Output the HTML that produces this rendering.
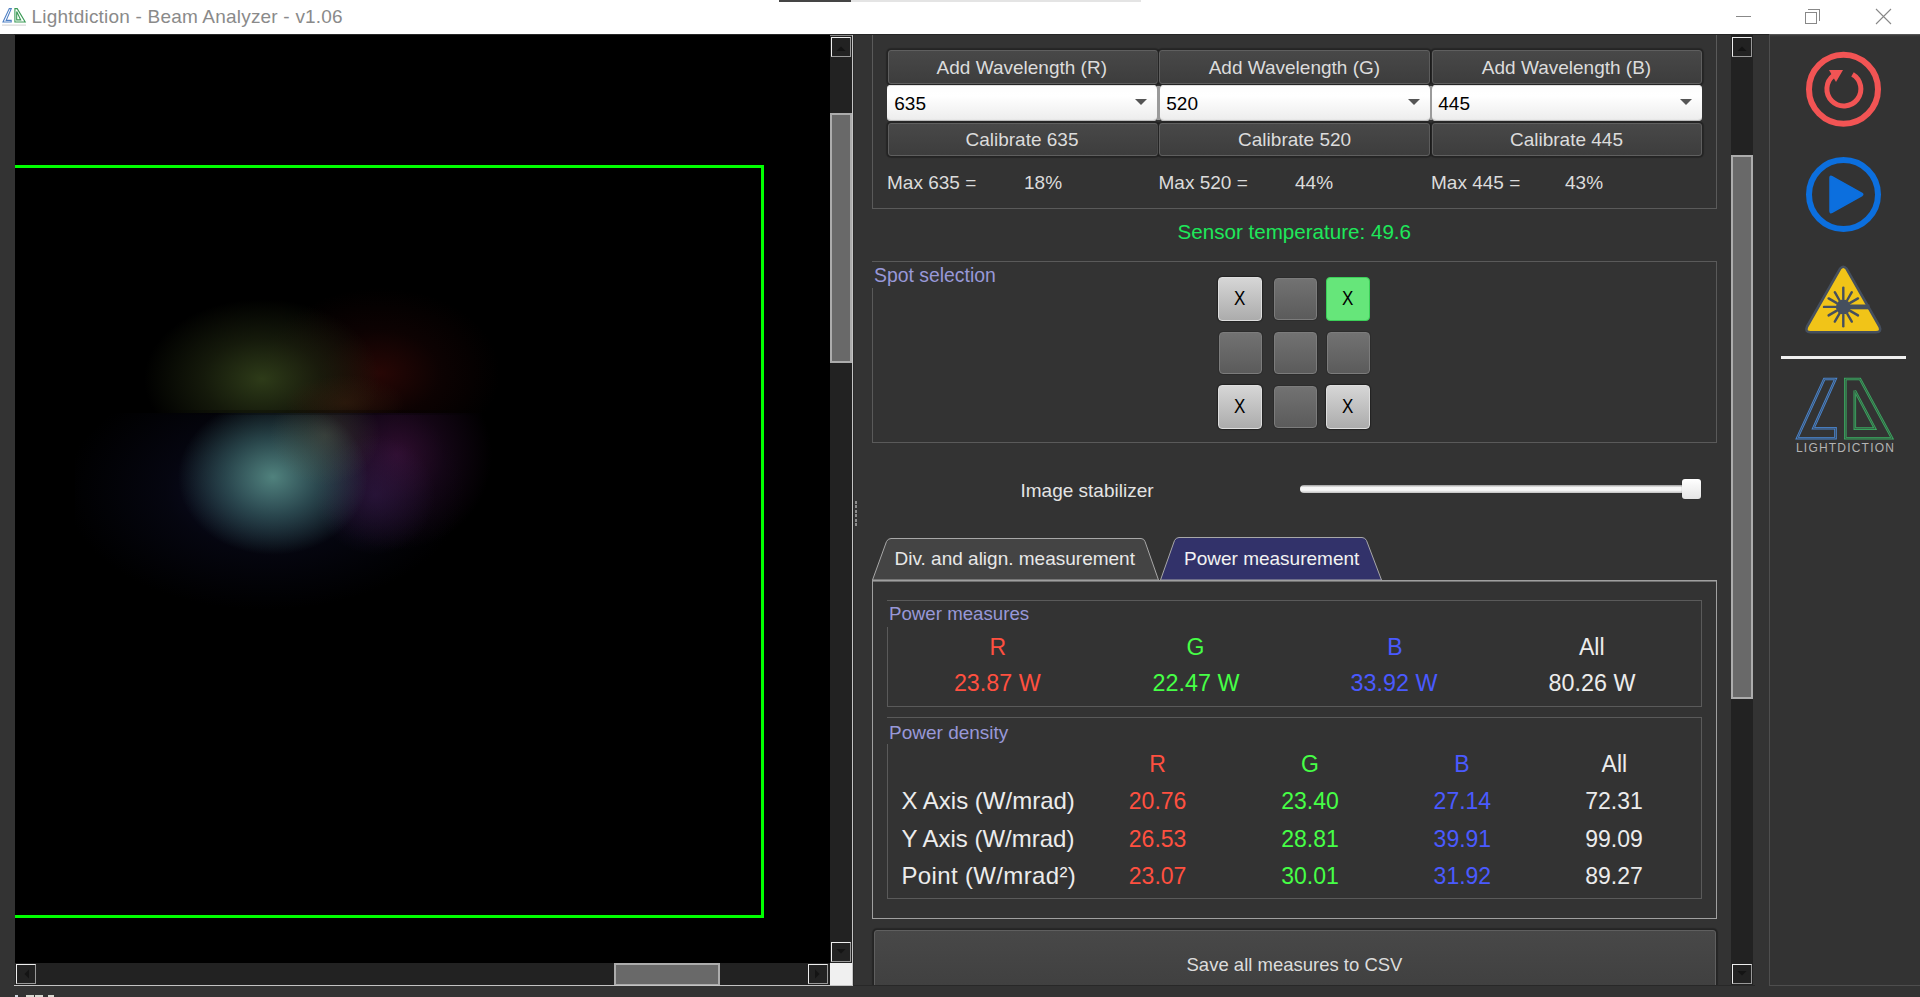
<!DOCTYPE html>
<html><head><meta charset="utf-8">
<style>
*{box-sizing:border-box;margin:0;padding:0}
html,body{width:1920px;height:997px;overflow:hidden;background:#333;font-family:"Liberation Sans",sans-serif}
.a{position:absolute}
.t{position:absolute;white-space:pre;line-height:1}
#title{left:0;top:0;width:1920px;height:34px;background:#fff;z-index:5}
.btn{position:absolute;border:1px solid #5f5f5f;border-radius:3px;background:linear-gradient(#484848,#3d3d3d);box-shadow:0 0 0 1px #242424,0 0 1px 2px rgba(0,0,0,.25)}
.combo{position:absolute;border-radius:4px;background:linear-gradient(#fdfdfd,#ffffff 30%,#ececec);box-shadow:inset 0 -2px 1px -1px #bdbdbd, inset 0 1px 0 #e0e0e0}
.combo i{position:absolute;right:10px;top:14px;width:0;height:0;border-left:6px solid transparent;border-right:6px solid transparent;border-top:6px solid #555}
.grp{position:absolute;border:1px solid #5a5a5a}
.sb{position:absolute;background:#222}
.arr{position:absolute;width:20px;height:20px;background:#222;border:1px solid #eee;border-right-color:#999;border-bottom-color:#999}
.thumb{position:absolute;background:#696969;border:2px solid #acacac}
.cell{position:absolute;width:44px;height:44px;border-radius:4px;font-size:20px;line-height:41px;text-align:center;color:#000}
.cell span{display:inline-block;transform:scaleX(0.85)}
.cx{background:linear-gradient(#d6d6d6,#acacac);border:1px solid #dedede;box-shadow:0 0 1px 1px rgba(0,0,0,.35)}
.cg{width:43px;height:42px;margin-top:1px;background:linear-gradient(#727272,#5b5b5b);border:1px solid #7c7c7c;box-shadow:0 0 0 1px #2c2c2c}
.cgr{background:#66e67a;border:1px solid #3ad058}
</style></head><body>
<!-- title bar -->
<div id="title" class="a">
<div class="a" style="left:779px;top:0;width:72px;height:2px;background:#454545"></div>
<div class="a" style="left:851px;top:0;width:290px;height:2px;background:#e4e4e4"></div>
<svg class="a" style="left:0;top:0" width="30" height="30" viewBox="0 0 30 30">
 <path d="M9.3 8.6h2L6.2 20.4h5v1.6H3z" fill="none" stroke="#4f80c4" stroke-width="1.1"/>
 <path d="M14.9 8.6h2.3l8 13.4h-10.3z M16.7 11.6v8.3h4z" fill="none" stroke="#3a9a55" stroke-width="1.1"/>
 <rect x="2" y="24.5" width="24" height="1.2" fill="#d8d8d8"/>
</svg>
<div class="t" style="left:31.5px;top:7px;font-size:19px;letter-spacing:0.2px;color:#8a8a8a">Lightdiction - Beam Analyzer - v1.06</div>
<div class="a" style="left:1736px;top:16px;width:15px;height:1px;background:#888"></div>
<div class="a" style="left:1808px;top:9px;width:12px;height:12px;border-top:1px solid #888;border-right:1px solid #888"></div>
<div class="a" style="left:1805px;top:12px;width:12px;height:12px;border:1px solid #888;background:#fff"></div>
<svg class="a" style="left:1875px;top:8px" width="17" height="17"><path d="M1 1L16 16M16 1L1 16" stroke="#888" stroke-width="1.1"/></svg>
</div>

<!-- top dark line -->
<div class="a" style="left:0;top:34px;width:1920px;height:1px;background:#262626"></div>
<div class="a" style="left:0;top:34px;width:14px;height:963px;background:#333"></div>

<!-- image viewport -->
<div class="a" style="left:15px;top:35px;width:815px;height:928px;background:#000;overflow:hidden">
<div class="a" style="left:60px;top:220px;width:520px;height:400px;background:
 radial-gradient(ellipse 55px 50px at 250px 180px, rgba(100,105,80,0.4), rgba(0,0,0,0) 100%),
 radial-gradient(ellipse 95px 78px at 198px 222px, rgba(84,136,130,0.95), rgba(60,105,105,0.62) 50%, rgba(0,0,0,0) 100%),
 radial-gradient(ellipse 60px 60px at 300px 240px, rgba(55,30,80,0.5), rgba(0,0,0,0) 100%),
 radial-gradient(ellipse 95px 95px at 322px 200px, rgba(62,17,60,0.75), rgba(42,12,45,0.45) 50%, rgba(0,0,0,0) 100%),
 radial-gradient(ellipse 200px 120px at 190px 235px, rgba(16,18,48,0.9), rgba(9,10,28,0.55) 50%, rgba(0,0,0,0) 100%);
 clip-path:inset(158px 0 0 0)"></div>
<div class="a" style="left:60px;top:220px;width:520px;height:400px;background:
 radial-gradient(ellipse 60px 28px at 270px 148px, rgba(62,34,16,0.5), rgba(0,0,0,0) 100%),
 radial-gradient(ellipse 118px 80px at 187px 124px, rgba(48,62,26,0.95), rgba(34,42,18,0.6) 50%, rgba(0,0,0,0) 100%),
 radial-gradient(ellipse 120px 85px at 305px 118px, rgba(46,8,6,0.85), rgba(28,5,5,0.45) 50%, rgba(0,0,0,0) 100%);
 clip-path:inset(0 0 242px 0)"></div>
<div class="a" style="left:60px;top:375px;width:520px;height:5px;background:linear-gradient(90deg,rgba(0,0,0,0),rgba(0,0,0,0.25) 30%,rgba(0,0,0,0.25) 70%,rgba(0,0,0,0))"></div>
<div class="a" style="left:-20px;top:130px;width:769px;height:753px;border:3px solid #00ff00"></div>
</div>
<!-- v scrollbar -->
<div class="sb" style="left:830px;top:35px;width:22px;height:928px"></div>
<div class="a" style="left:852px;top:35px;width:1px;height:951px;background:#c4c4c4"></div>
<div class="a" style="left:830px;top:35px;width:22px;height:1px;background:#888"></div>
<div class="arr" style="left:831px;top:37px"></div>
<div class="thumb" style="left:830px;top:113px;width:22px;height:250px"></div>
<div class="arr" style="left:831px;top:942px"></div>
<!-- h scrollbar -->
<div class="sb" style="left:15px;top:963px;width:815px;height:22px"></div>
<div class="a" style="left:14px;top:985px;width:839px;height:1px;background:#c4c4c4"></div>
<div class="arr" style="left:16px;top:964px"></div>
<div class="thumb" style="left:614px;top:963px;width:106px;height:22px;border-bottom-width:1px"></div>
<div class="arr" style="left:808px;top:964px"></div>
<div class="a" style="left:830px;top:963px;width:22px;height:22px;background:#f0f0f0"></div>

<!-- splitter -->
<div class="a" style="left:853px;top:35px;width:1px;height:951px;background:#2a2a2a"></div>
<div class="a" style="left:855px;top:501px;width:2px;height:3px;background:#8c8c8c"></div><div class="a" style="left:855px;top:505px;width:2px;height:3px;background:#8c8c8c"></div><div class="a" style="left:855px;top:510px;width:2px;height:3px;background:#8c8c8c"></div><div class="a" style="left:855px;top:514px;width:2px;height:3px;background:#8c8c8c"></div><div class="a" style="left:855px;top:519px;width:2px;height:3px;background:#8c8c8c"></div><div class="a" style="left:855px;top:523px;width:2px;height:3px;background:#8c8c8c"></div>

<!-- right panel clip -->
<div class="a" style="left:854px;top:35px;width:877px;height:950px;overflow:hidden">
<div class="a" style="left:-854px;top:-35px;width:1920px;height:997px">
<!-- group 1 -->
<div class="grp" style="left:872px;top:20px;width:845px;height:189px"></div>
<div class="btn" style="left:888px;top:50px;width:270px;height:34px"></div>
<div class="btn" style="left:1159px;top:50px;width:271px;height:34px"></div>
<div class="btn" style="left:1432px;top:50px;width:270px;height:34px"></div>
<div class="a" style="left:1157px;top:86px;width:3px;height:34px;background:#9a9a9a"></div>
<div class="a" style="left:1430px;top:86px;width:2px;height:34px;background:#9a9a9a"></div>
<div class="combo" style="left:887px;top:85px;width:270px;height:36px"><i></i></div>
<div class="combo" style="left:1159.5px;top:85px;width:270.5px;height:36px"><i></i></div>
<div class="combo" style="left:1431.5px;top:85px;width:270.5px;height:36px"><i></i></div>
<div class="btn" style="left:888px;top:123px;width:270px;height:33px"></div>
<div class="btn" style="left:1159px;top:123px;width:271px;height:33px"></div>
<div class="btn" style="left:1432px;top:123px;width:270px;height:33px"></div>

<!-- spot selection -->
<div class="grp" style="left:872px;top:261px;width:845px;height:182px"></div>
<div class="a" style="left:871px;top:262px;width:128px;height:26px;background:#333"></div>
<div class="cell cx" style="left:1218px;top:277px"><span>X</span></div>
<div class="cell cg" style="left:1273.5px;top:277px"></div>
<div class="cell cgr" style="left:1326px;top:277px"><span>X</span></div>
<div class="cell cg" style="left:1219px;top:331px"></div>
<div class="cell cg" style="left:1273.5px;top:331px"></div>
<div class="cell cg" style="left:1327px;top:331px"></div>
<div class="cell cx" style="left:1218px;top:385px"><span>X</span></div>
<div class="cell cg" style="left:1273.5px;top:385px"></div>
<div class="cell cx" style="left:1326px;top:385px"><span>X</span></div>

<!-- stabilizer -->
<div class="a" style="left:1300px;top:485px;width:391px;height:8px;border-radius:4px;background:linear-gradient(#9c9c9c,#f6f6f6 30%,#f8f8f8 65%,#c0c0c0)"></div>
<div class="a" style="left:1682px;top:479px;width:19px;height:20px;border-radius:3px;background:linear-gradient(#ffffff,#e4e4e4);box-shadow:0 0 1px rgba(0,0,0,.5)"></div>

<!-- tabs -->
<svg class="a" style="left:0;top:0" width="1920" height="997">
 <path d="M872.5 580 L886.5 541.5 Q888 538.5 891 538.5 L1141 538.5 Q1144 538.5 1145 541.5 L1158.5 580 Z" fill="#444" stroke="#a8a8a8" stroke-width="1"/>
 <path d="M1160.5 580 L1174.5 540.5 Q1176 537.5 1179 537.5 L1362 537.5 Q1365 537.5 1366.5 540.5 L1381.5 580 Z" fill="#32326a" stroke="#a8a8a8" stroke-width="1"/>
</svg>
<div class="a" style="left:872px;top:580px;width:845px;height:339px;border:1px solid #a0a0a0"></div>
<div class="a" style="left:873px;top:581px;width:843px;height:1px;background:#707070"></div>

<!-- power measures -->
<div class="grp" style="left:887px;top:600px;width:815px;height:107px"></div>
<div class="a" style="left:886px;top:601px;width:146px;height:26px;background:#333"></div>
<!-- power density -->
<div class="grp" style="left:887px;top:717px;width:815px;height:182px"></div>
<div class="a" style="left:886px;top:718px;width:126px;height:26px;background:#333"></div>

<!-- save button -->
<div class="btn" style="left:874px;top:930px;width:842px;height:80px"></div>

<div class="t" style="top:57.92px;font-size:19px;color:#dcdcdc;left:771.80px;width:500px;text-align:center;">Add Wavelength (R)</div>
<div class="t" style="top:57.92px;font-size:19px;color:#dcdcdc;left:1044.40px;width:500px;text-align:center;">Add Wavelength (G)</div>
<div class="t" style="top:57.92px;font-size:19px;color:#dcdcdc;left:1316.50px;width:500px;text-align:center;">Add Wavelength (B)</div>
<div class="t" style="top:93.92px;font-size:19px;color:#000;left:894.30px;">635</div>
<div class="t" style="top:93.92px;font-size:19px;color:#000;left:1166.30px;">520</div>
<div class="t" style="top:93.92px;font-size:19px;color:#000;left:1438.30px;">445</div>
<div class="t" style="top:129.92px;font-size:19px;color:#dcdcdc;left:772.00px;width:500px;text-align:center;">Calibrate 635</div>
<div class="t" style="top:129.92px;font-size:19px;color:#dcdcdc;left:1044.60px;width:500px;text-align:center;">Calibrate 520</div>
<div class="t" style="top:129.92px;font-size:19px;color:#dcdcdc;left:1316.50px;width:500px;text-align:center;">Calibrate 445</div>
<div class="t" style="top:172.92px;font-size:19px;color:#dcdcdc;left:887.00px;">Max 635 =</div>
<div class="t" style="top:172.92px;font-size:19px;color:#dcdcdc;left:1024.00px;">18%</div>
<div class="t" style="top:172.92px;font-size:19px;color:#dcdcdc;left:1158.50px;">Max 520 =</div>
<div class="t" style="top:172.92px;font-size:19px;color:#dcdcdc;left:1295.00px;">44%</div>
<div class="t" style="top:172.92px;font-size:19px;color:#dcdcdc;left:1431.00px;">Max 445 =</div>
<div class="t" style="top:172.92px;font-size:19px;color:#dcdcdc;left:1565.00px;">43%</div>
<div class="t" style="top:221.56px;font-size:20.6px;color:#1ee85a;left:1177.50px;">Sensor temperature: 49.6</div>
<div class="t" style="top:265.58px;font-size:19.4px;color:#9898d8;left:874.00px;">Spot selection</div>
<div class="t" style="top:480.92px;font-size:19px;color:#e4e4e4;left:1020.50px;">Image stabilizer</div>
<div class="t" style="top:548.92px;font-size:19px;color:#e8e8e8;left:894.50px;">Div. and align. measurement</div>
<div class="t" style="top:548.92px;font-size:19px;color:#f2f2f2;left:1184.00px;">Power measurement</div>
<div class="t" style="top:605.17px;font-size:18.7px;color:#9898d8;left:889.00px;">Power measures</div>
<div class="t" style="top:635.53px;font-size:23px;color:#ff5040;left:747.80px;width:500px;text-align:center;">R</div>
<div class="t" style="top:635.53px;font-size:23px;color:#46ff46;left:945.40px;width:500px;text-align:center;">G</div>
<div class="t" style="top:635.53px;font-size:23px;color:#4a5aff;left:1145.00px;width:500px;text-align:center;">B</div>
<div class="t" style="top:635.53px;font-size:23px;color:#ececec;left:1341.80px;width:500px;text-align:center;">All</div>
<div class="t" style="top:672.28px;font-size:23.3px;color:#ff5040;left:747.30px;width:500px;text-align:center;">23.87 W</div>
<div class="t" style="top:672.28px;font-size:23.3px;color:#46ff46;left:946.00px;width:500px;text-align:center;">22.47 W</div>
<div class="t" style="top:672.28px;font-size:23.3px;color:#4a5aff;left:1144.00px;width:500px;text-align:center;">33.92 W</div>
<div class="t" style="top:672.28px;font-size:23.3px;color:#ececec;left:1342.00px;width:500px;text-align:center;">80.26 W</div>
<div class="t" style="top:722.92px;font-size:19px;color:#9898d8;left:889.00px;">Power density</div>
<div class="t" style="top:752.53px;font-size:23px;color:#ff5040;left:907.50px;width:500px;text-align:center;">R</div>
<div class="t" style="top:752.53px;font-size:23px;color:#46ff46;left:1060.00px;width:500px;text-align:center;">G</div>
<div class="t" style="top:752.53px;font-size:23px;color:#4a5aff;left:1212.00px;width:500px;text-align:center;">B</div>
<div class="t" style="top:752.53px;font-size:23px;color:#ececec;left:1364.40px;width:500px;text-align:center;">All</div>
<div class="t" style="top:788.68px;font-size:24px;color:#ececec;left:901.50px;">X Axis (W/mrad)</div>
<div class="t" style="top:826.68px;font-size:24px;color:#ececec;left:901.50px;">Y Axis (W/mrad)</div>
<div class="t" style="top:863.68px;font-size:24px;color:#ececec;letter-spacing:0.35px;left:901.50px;">Point (W/mrad²)</div>
<div class="t" style="top:789.53px;font-size:23px;color:#ff5040;left:907.60px;width:500px;text-align:center;">20.76</div>
<div class="t" style="top:789.53px;font-size:23px;color:#46ff46;left:1060.00px;width:500px;text-align:center;">23.40</div>
<div class="t" style="top:789.53px;font-size:23px;color:#4a5aff;left:1212.40px;width:500px;text-align:center;">27.14</div>
<div class="t" style="top:789.53px;font-size:23px;color:#ececec;left:1364.00px;width:500px;text-align:center;">72.31</div>
<div class="t" style="top:827.53px;font-size:23px;color:#ff5040;left:907.60px;width:500px;text-align:center;">26.53</div>
<div class="t" style="top:827.53px;font-size:23px;color:#46ff46;left:1060.00px;width:500px;text-align:center;">28.81</div>
<div class="t" style="top:827.53px;font-size:23px;color:#4a5aff;left:1212.40px;width:500px;text-align:center;">39.91</div>
<div class="t" style="top:827.53px;font-size:23px;color:#ececec;left:1364.00px;width:500px;text-align:center;">99.09</div>
<div class="t" style="top:864.53px;font-size:23px;color:#ff5040;left:907.60px;width:500px;text-align:center;">23.07</div>
<div class="t" style="top:864.53px;font-size:23px;color:#46ff46;left:1060.00px;width:500px;text-align:center;">30.01</div>
<div class="t" style="top:864.53px;font-size:23px;color:#4a5aff;left:1212.40px;width:500px;text-align:center;">31.92</div>
<div class="t" style="top:864.53px;font-size:23px;color:#ececec;left:1364.00px;width:500px;text-align:center;">89.27</div>
<div class="t" style="top:956.34px;font-size:18.5px;color:#dcdcdc;left:1044.50px;width:500px;text-align:center;">Save all measures to CSV</div>
</div>
</div>
<div class="a" style="left:854px;top:985px;width:901px;height:1px;background:#282828"></div>

<!-- right scrollbar -->
<div class="sb" style="left:1731px;top:35px;width:22px;height:950px"></div>
<div class="arr" style="left:1732px;top:37px"></div>
<div class="thumb" style="left:1731px;top:155px;width:22px;height:544px"></div>
<div class="arr" style="left:1732px;top:964px"></div>

<svg class="a" style="left:0;top:0" width="1920" height="997">
 <path d="M836.5 51h9l-4.5-4.5z" fill="#141414"/>
 <path d="M836.5 949h9l-4.5 4.5z" fill="#141414"/>
 <path d="M1737.5 51h9l-4.5-4.5z" fill="#141414"/>
 <path d="M1737.5 971h9l-4.5 4.5z" fill="#141414"/>
 <path d="M29 969.5v9l-4.5-4.5z" fill="#141414"/>
 <path d="M815 969.5v9l4.5-4.5z" fill="#141414"/>
</svg>

<!-- toolbar -->
<div class="a" style="left:1769px;top:34px;width:151px;height:952px;border-left:1px solid #4e4e4e;border-bottom:1px solid #4e4e4e;border-top:1px solid #555;background:linear-gradient(#3e3e3e,#333 2px)"></div>
<svg class="a" style="left:1770px;top:35px" width="150" height="430" viewBox="1770 35 150 430">
 <circle cx="1843.5" cy="89.3" r="34.5" fill="none" stroke="#f25454" stroke-width="6"/>
 <path d="M1852.5 74.3 A17 17 0 1 1 1833.5 75.5" fill="none" stroke="#f25454" stroke-width="5"/>
 <path d="M1829 70 L1843 70 L1836 82 Z" fill="#f25454"/>
 <circle cx="1843.5" cy="194.4" r="34.5" fill="none" stroke="#0c6fde" stroke-width="6"/>
 <path d="M1832 176.6 Q1830 175.6 1830 178 L1830 211 Q1830 213.4 1832 212.4 L1862 195.5 Q1863.5 194.3 1862 193.3 Z" fill="#0c6fde" stroke="#0c6fde" stroke-width="1.5" stroke-linejoin="round"/>
 <path d="M1840 268.8 Q1843.3 264.6 1846.6 268.8 L1879.5 326.5 Q1882 332.3 1876 332.3 L1810.6 332.3 Q1804.6 332.3 1807.1 326.5 Z" fill="#f1c418" stroke="#454f5e" stroke-width="2.6" stroke-linejoin="round"/>
 <g stroke="#454f5e" stroke-width="2.4" stroke-linecap="round">
<line x1="1850.2" y1="302.9" x2="1858.0" y2="298.4"/>
<line x1="1847.3" y1="300.0" x2="1851.8" y2="292.2"/>
<line x1="1843.3" y1="298.9" x2="1843.3" y2="287.6"/>
<line x1="1839.3" y1="300.0" x2="1834.8" y2="292.2"/>
<line x1="1836.4" y1="302.9" x2="1828.6" y2="298.4"/>
<line x1="1835.3" y1="306.9" x2="1824.0" y2="306.9"/>
<line x1="1836.4" y1="310.9" x2="1828.6" y2="315.4"/>
<line x1="1839.3" y1="313.8" x2="1834.8" y2="321.6"/>
<line x1="1843.3" y1="314.9" x2="1843.3" y2="326.2"/>
<line x1="1847.3" y1="313.8" x2="1851.8" y2="321.6"/>
<line x1="1850.2" y1="310.9" x2="1858.0" y2="315.4"/>
 </g>
 <line x1="1843.3" y1="306.9" x2="1869.5" y2="306.9" stroke="#454f5e" stroke-width="4.8"/>
 <circle cx="1843.3" cy="306.9" r="7.4" fill="#454f5e"/>
 <rect x="1781" y="356" width="125" height="3" fill="#f0f0f0"/>
 <path d="M1824.3 379 L1835.5 379 L1813.4 428.3 L1835.5 428.3 L1835.5 438.2 L1797.2 438.2 Z" fill="none" stroke="#4a86d0" stroke-width="2.6"/>
 <path d="M1824.3 379 L1835.5 379 L1813.4 428.3 L1835.5 428.3 L1835.5 438.2 L1797.2 438.2 Z" fill="none" stroke="#333" stroke-width="0.6"/>
 <path d="M1845.3 379 L1860 379 L1892 438.2 L1845.3 438.2 Z M1854.8 390.5 L1854.8 428.6 L1875 428.6 Z" fill="none" stroke="#3aa860" stroke-width="2.6"/>
 <path d="M1845.3 379 L1860 379 L1892 438.2 L1845.3 438.2 Z M1854.8 390.5 L1854.8 428.6 L1875 428.6 Z" fill="none" stroke="#333" stroke-width="0.6"/>
</svg>
<div class="t" style="left:1796px;top:442px;font-size:12px;letter-spacing:1.2px;color:#b4b4b4">LIGHTDICTION</div>

<!-- bottom status fragments -->
<div class="a" style="left:15px;top:995px;width:3px;height:2px;background:#cfd8e0"></div>
<div class="a" style="left:26px;top:995px;width:8px;height:2px;background:#d8d8d0"></div>
<div class="a" style="left:35px;top:995px;width:8px;height:2px;background:#d8d8d0"></div>
<div class="a" style="left:48px;top:995px;width:6px;height:2px;background:#d8d8d0"></div>
</body></html>
